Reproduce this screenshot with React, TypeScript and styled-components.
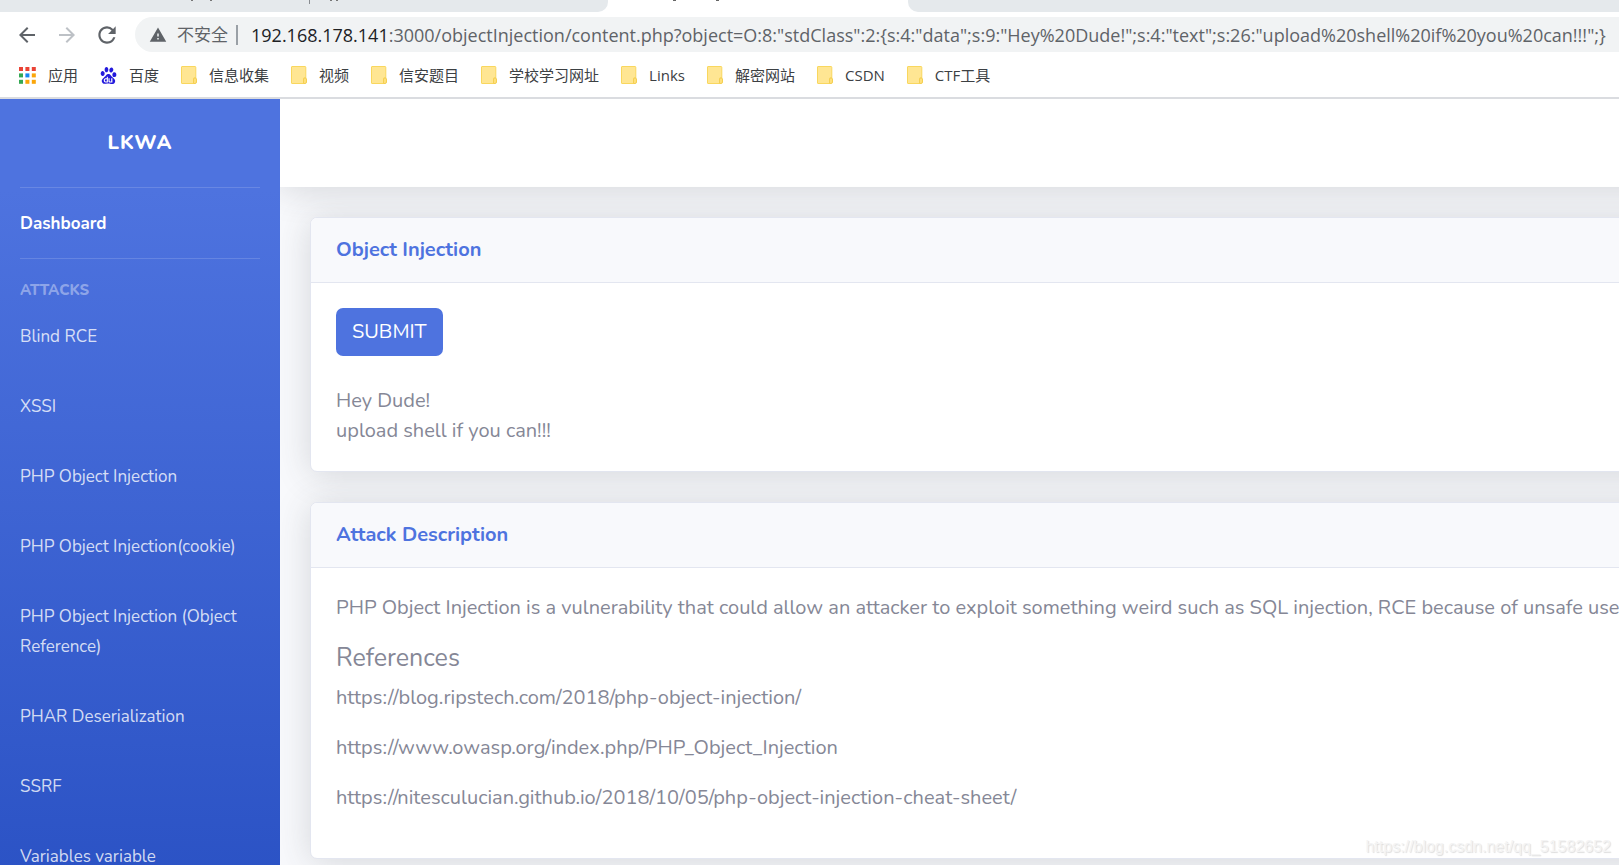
import React from 'react';
import styled, { createGlobalStyle } from 'styled-components';
import { MdArrowBack, MdArrowForward, MdRefresh, MdWarning } from 'react-icons/md';
import { SiBaidu } from 'react-icons/si';

const GlobalStyle = createGlobalStyle`
  *, *::before, *::after { box-sizing: border-box; }
  body {
    margin: 0;
    overflow: hidden;
    background: #f8f9fc;
    color: #858796;
    font: 400 20px/30px Nunito, Lato, "Noto Sans CJK SC", sans-serif;
  }
  h1, h2, h3, p, ul { margin: 0; padding: 0; }
  ul { list-style: none; }
  a { color: inherit; text-decoration: none; }
  button { font: inherit; cursor: pointer; }
  svg { display: block; flex: none; }
`;

const Window = styled.div`
  position: relative;
  display: flex;
  flex-direction: column;
  height: 100vh;
  overflow: hidden;
`;

/* Browser chrome */

const Chrome = styled.header`
  flex: none;
  background: #fff;
  border-bottom: 2px solid #dadce0;
  font-family: "Open Sans", "Noto Sans CJK SC", sans-serif;
`;

const TabStrip = styled.div`
  display: flex;
  height: 12px;
`;

const InactiveTabs = styled.div<{ $side: 'left' | 'right' }>`
  background: #e5e9ec;
  ${p => (p.$side === 'left'
    ? 'width: 608px; border-bottom-right-radius: 10px;'
    : 'flex: 1; border-bottom-left-radius: 10px;')}
`;

const ActiveTab = styled.div`
  width: 300px;
`;

const Toolbar = styled.div`
  display: flex;
  align-items: center;
  padding: 5px 0 1px 15px;
`;

const ToolButton = styled.button<{ $dim?: boolean }>`
  display: flex;
  align-items: center;
  justify-content: center;
  width: 24px;
  height: 35px;
  margin-right: 16px;
  padding: 0;
  border: 0;
  background: none;
  color: ${p => (p.$dim ? '#bdc1c6' : '#5f6368')};
`;

const AddressBar = styled.div`
  display: flex;
  flex: 1;
  align-items: center;
  min-width: 0;
  height: 35px;
  padding-left: 14px;
  border-radius: 18px 0 0 18px;
  background: #f1f3f4;
  color: #5f6368;
  font-size: 18px;
  line-height: 24px;
  white-space: nowrap;
`;

const Security = styled.span`
  margin-left: 10px;
  padding-right: 8px;
  font-size: 17px;
`;

const Divider = styled.span`
  width: 2px;
  height: 20px;
  margin-right: 13px;
  background: #9aa0a6;
`;

const Host = styled.label`
  color: #202124;
`;

const UrlInput = styled.input`
  flex: 1;
  min-width: 0;
  padding: 0;
  border: 0;
  outline: 0;
  background: none;
  color: inherit;
  font: inherit;
`;

const Bookmarks = styled.nav`
  display: flex;
  align-items: center;
  gap: 22px;
  height: 44px;
  padding: 0 19px;
  color: #3c4043;
  font-size: 15px;
  line-height: 20px;
  white-space: nowrap;
`;

const Bookmark = styled.a`
  display: flex;
  align-items: center;
  gap: 12px;
`;

/* Application page */

const Page = styled.div`
  display: flex;
  flex: 1;
  min-height: 0;
`;

const Sidebar = styled.aside`
  flex: none;
  width: 280px;
  background: linear-gradient(180deg, #4e73df 12%, #224abe 125%);
`;

const Brand = styled.a`
  display: flex;
  align-items: center;
  justify-content: center;
  height: 88px;
  color: #fff;
  font-weight: 800;
  letter-spacing: 1px;
`;

const Rule = styled.hr`
  height: 1px;
  margin: 0 20px;
  border: 0;
  background: rgba(255, 255, 255, 0.15);
`;

const NavLink = styled.a<{ $active?: boolean }>`
  display: block;
  padding: 21px 20px 19px;
  color: ${p => (p.$active ? '#fff' : 'rgba(255, 255, 255, 0.8)')};
  font-size: 17px;
  font-weight: ${p => (p.$active ? 700 : 400)};
`;

const NavHeading = styled.h2`
  margin-top: 20px;
  padding: 0 20px;
  color: rgba(255, 255, 255, 0.4);
  font-size: 15px;
  font-weight: 800;
  line-height: 22px;
`;

const Main = styled.main`
  flex: 1;
  min-width: 0;
  overflow: hidden;
`;

/* The page is wider than the window, so its panels run past the right edge. */
const Topbar = styled.div`
  height: 88px;
  margin-right: -80px;
  background: #fff;
  box-shadow: 0 3px 35px rgba(58, 59, 69, 0.18);
`;

const Content = styled.div`
  display: flex;
  flex-direction: column;
  gap: 30px;
  margin-right: -80px;
  padding: 30px 0 30px 30px;
`;

const Card = styled.section`
  border: 1px solid #e3e6f0;
  border-radius: 7px;
  background: #fff;
  box-shadow: 0 3px 35px rgba(58, 59, 69, 0.18);
`;

const CardHeader = styled.h1`
  padding: 20px 25px;
  border-bottom: 1px solid #e3e6f0;
  border-radius: 6px 6px 0 0;
  background: #f8f9fc;
  color: #4e73df;
  font-size: 20px;
  font-weight: 700;
  line-height: 24px;
`;

const CardBody = styled.div`
  padding: 25px;
  white-space: nowrap;
`;

const Submit = styled.button`
  display: block;
  height: 48px;
  margin-bottom: 30px;
  padding: 0 16px;
  border: 0;
  border-radius: 7px;
  background: #4e73df;
  color: #fff;
`;

const Paragraph = styled.p`
  margin-bottom: 20px;
`;

const SubHeading = styled.h3`
  margin-bottom: 10px;
  font-size: 25px;
  font-weight: 400;
  line-height: 30px;
`;

const Watermark = styled.div`
  position: absolute;
  right: 8px;
  bottom: 6px;
  color: #f4f4f4;
  font: 16px/24px "Liberation Sans", sans-serif;
  text-shadow: 1px 1px 1px #ddd;
`;

const dotColors = ['#ea4335', '#ea4335', '#ea4335', '#34a853', '#1a88f0', '#fba60a', '#34a853', '#fba60a', '#fba60a'];

const AppsIcon = () => (
  <svg width="17" height="17" viewBox="0 0 17 17" aria-hidden="true">
    {dotColors.map((c, i) => (
      <rect key={i} x={(i % 3) * 6.4} y={Math.floor(i / 3) * 6.4} width="4" height="4" fill={c} />
    ))}
  </svg>
);

const FolderIcon = () => (
  <svg width="16" height="18" viewBox="0 0 16 18" aria-hidden="true">
    <path d="M1 .5h13q.8 0 .8.8V12h-2v5.500H1q-.5 0-.5-.5V1Q.5.5 1 .5Z" fill="#ffe693" stroke="#f9d75e" />
    <path d="M12.500 17.500V13q0-1 1.500-1t1.500 1v3q0 1.500-1.500 1.500Z" fill="#ffe07a" stroke="#f4cf52" />
  </svg>
);

const bookmarks = ['信息收集', '视频', '信安题目', '学校学习网址', 'Links', '解密网站', 'CSDN', 'CTF工具'];

const attacks = [
  'Blind RCE',
  'XSSI',
  'PHP Object Injection',
  'PHP Object Injection(cookie)',
  'PHP Object Injection (Object Reference)',
  'PHAR Deserialization',
  'SSRF',
  'Variables variable',
];

const references = [
  'https://blog.ripstech.com/2018/php-object-injection/',
  'https://www.owasp.org/index.php/PHP_Object_Injection',
  'https://nitesculucian.github.io/2018/10/05/php-object-injection-cheat-sheet/',
];

export default function App() {
  return (
    <Window>
      <GlobalStyle />
      <Chrome>
        <TabStrip>
          <InactiveTabs $side="left">
            <svg width="350" height="6" aria-hidden="true">
              <path d="M191 0h2v1h-2zM210 0h2v1h-2zM330 0h2v1h-2zM336 0h2v1h-2z" fill="#777" />
              <path d="M309 0h1v4h-1z" fill="#888c90" />
            </svg>
          </InactiveTabs>
          <ActiveTab>
            <svg width="120" height="6" aria-hidden="true">
              <path d="M65 0h3v1h-3zM108 0h3v1h-3z" fill="#666" />
            </svg>
          </ActiveTab>
          <InactiveTabs $side="right" />
        </TabStrip>
        <Toolbar>
          <ToolButton aria-label="Back"><MdArrowBack size={24} /></ToolButton>
          <ToolButton aria-label="Forward" $dim><MdArrowForward size={24} /></ToolButton>
          <ToolButton aria-label="Reload"><MdRefresh size={26} /></ToolButton>
          <AddressBar>
            <MdWarning size={18} />
            <Security>不安全</Security>
            <Divider />
            <Host htmlFor="url">192.168.178.141</Host>
            <UrlInput
              id="url"
              spellCheck={false}
              defaultValue={':3000/objectInjection/content.php?object=O:8:"stdClass":2:{s:4:"data";s:9:"Hey%20Dude!";s:4:"text";s:26:"upload%20shell%20if%20you%20can!!!";}'}
            />
          </AddressBar>
        </Toolbar>
        <Bookmarks>
          <Bookmark href="#apps"><AppsIcon />应用</Bookmark>
          <Bookmark href="#baidu"><SiBaidu size={17} color="#2319dc" />百度</Bookmark>
          {bookmarks.map(name => (
            <Bookmark key={name} href="#folder"><FolderIcon />{name}</Bookmark>
          ))}
        </Bookmarks>
      </Chrome>
      <Page>
        <Sidebar>
          <Brand href="#home">LKWA</Brand>
          <Rule />
          <NavLink href="#dashboard" $active>Dashboard</NavLink>
          <Rule />
          <NavHeading>ATTACKS</NavHeading>
          <ul>
            {attacks.map(name => (
              <li key={name}><NavLink href="#attack">{name}</NavLink></li>
            ))}
          </ul>
        </Sidebar>
        <Main>
          <Topbar />
          <Content>
            <Card>
              <CardHeader>Object Injection</CardHeader>
              <CardBody>
                <Submit>SUBMIT</Submit>
                <p>Hey Dude!<br />upload shell if you can!!!</p>
              </CardBody>
            </Card>
            <Card>
              <CardHeader>Attack Description</CardHeader>
              <CardBody>
                <Paragraph>
                  PHP Object Injection is a vulnerability that could allow an attacker to exploit something weird such as SQL injection, RCE because of unsafe use
                </Paragraph>
                <SubHeading>References</SubHeading>
                {references.map(url => (
                  <Paragraph key={url}><a href={url}>{url}</a></Paragraph>
                ))}
              </CardBody>
            </Card>
          </Content>
        </Main>
      </Page>
      <Watermark>https://blog.csdn.net/qq_51582652</Watermark>
    </Window>
  );
}
